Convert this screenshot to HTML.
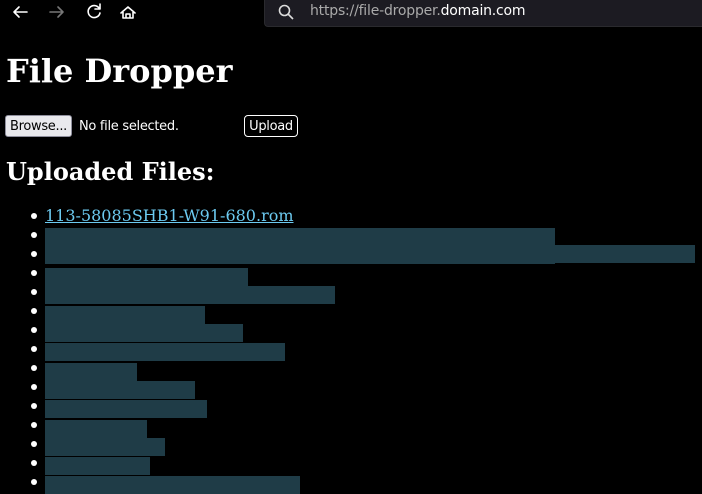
<!DOCTYPE html>
<html><head><style>
body{margin:0;background:#000;width:702px;height:494px;overflow:hidden;position:relative;font-family:"DejaVu Serif",serif;color:#fff}
.abs{position:absolute}
.bar{position:absolute;left:45px;height:18px;background:#1f3c47}
.dot{position:absolute;left:31px;width:6px;height:6px;border-radius:50%;background:#fff}
</style></head><body>
<svg class="abs" style="left:0;top:0" width="150" height="26" viewBox="0 0 150 26" fill="none" stroke-linecap="round" stroke-linejoin="round" stroke-width="1.6">
<path d="M27 12H14M19 7l-5 5 5 5" stroke="#fff"/>
<path d="M50 12h13M58 7l5 5-5 5" stroke="#777"/>
<path d="M99 8a6 6 0 1 0 1 5M100 4v5h-5" stroke="#fff"/>
<path d="M121 13l7-6 7 6M123 11v7h10v-7M126 18v-4h4v4" stroke="#fff"/>
</svg>
<div class="abs" style="left:264px;top:0;width:440px;height:26px;background:#1c1b22;border-bottom:1px solid #2a2a2e;border-left:1px solid #2a2a2e;border-radius:0 0 0 4px"></div>
<svg class="abs" style="left:277px;top:3px" width="18" height="18" viewBox="0 0 18 18" fill="none" stroke="#ddd" stroke-width="1.6"><circle cx="7.5" cy="7.5" r="5"/><path d="M11 11l5 5"/></svg>
<div class="abs" style="left:310px;top:3px;font:14px 'DejaVu Sans','Liberation Sans',sans-serif;color:#aaa;letter-spacing:-0.2px">https://file-dropper.<span style="color:#fff">domain.com</span></div>
<div class="abs" style="left:6px;top:52px;font-weight:bold;font-size:32px">File Dropper</div>
<div class="abs" style="left:5px;top:115px;width:67px;height:22px;background:#e9e9ed;border:1px solid #8f8f9d;border-radius:3px;box-sizing:border-box;color:#000;font:13px 'DejaVu Sans','Liberation Sans',sans-serif;line-height:22px;text-align:center;letter-spacing:-0.3px">Browse...</div>
<div class="abs" style="left:79px;top:119px;font:13px 'DejaVu Sans','Liberation Sans',sans-serif;letter-spacing:-0.3px">No file selected.</div>
<div class="abs" style="left:244px;top:115px;width:54px;height:22px;border:1px solid #fff;border-radius:4px;box-sizing:border-box;font:13px 'DejaVu Sans','Liberation Sans',sans-serif;line-height:21px;text-align:center;letter-spacing:-0.3px">Upload</div>
<div class="abs" style="left:6px;top:157px;font-weight:bold;font-size:24px">Uploaded Files:</div>
<div class="dot" style="top:213px"></div>
<div class="abs" style="left:45px;top:206px;font-size:16px;color:#6ccaf0;text-decoration:underline">113-58085SHB1-W91-680.rom</div>
<div class="bar" style="top:228px;width:510px;height:36px"></div>
<div class="bar" style="top:245px;width:650px;height:18px"></div>
<div class="bar" style="top:268px;width:203px"></div>
<div class="bar" style="top:286px;width:290px"></div>
<div class="bar" style="top:306px;width:160px"></div>
<div class="bar" style="top:324px;width:198px"></div>
<div class="bar" style="top:343px;width:240px"></div>
<div class="bar" style="top:363px;width:92px"></div>
<div class="bar" style="top:381px;width:150px"></div>
<div class="bar" style="top:400px;width:162px"></div>
<div class="bar" style="top:420px;width:102px"></div>
<div class="bar" style="top:438px;width:120px"></div>
<div class="bar" style="top:457px;width:105px"></div>
<div class="bar" style="top:476px;width:255px"></div>
<div class="dot" style="top:232px"></div><div class="dot" style="top:251px"></div><div class="dot" style="top:270px"></div><div class="dot" style="top:289px"></div><div class="dot" style="top:308px"></div><div class="dot" style="top:327px"></div><div class="dot" style="top:346px"></div><div class="dot" style="top:365px"></div><div class="dot" style="top:384px"></div><div class="dot" style="top:403px"></div><div class="dot" style="top:422px"></div><div class="dot" style="top:441px"></div><div class="dot" style="top:460px"></div><div class="dot" style="top:479px"></div>
</body></html>
